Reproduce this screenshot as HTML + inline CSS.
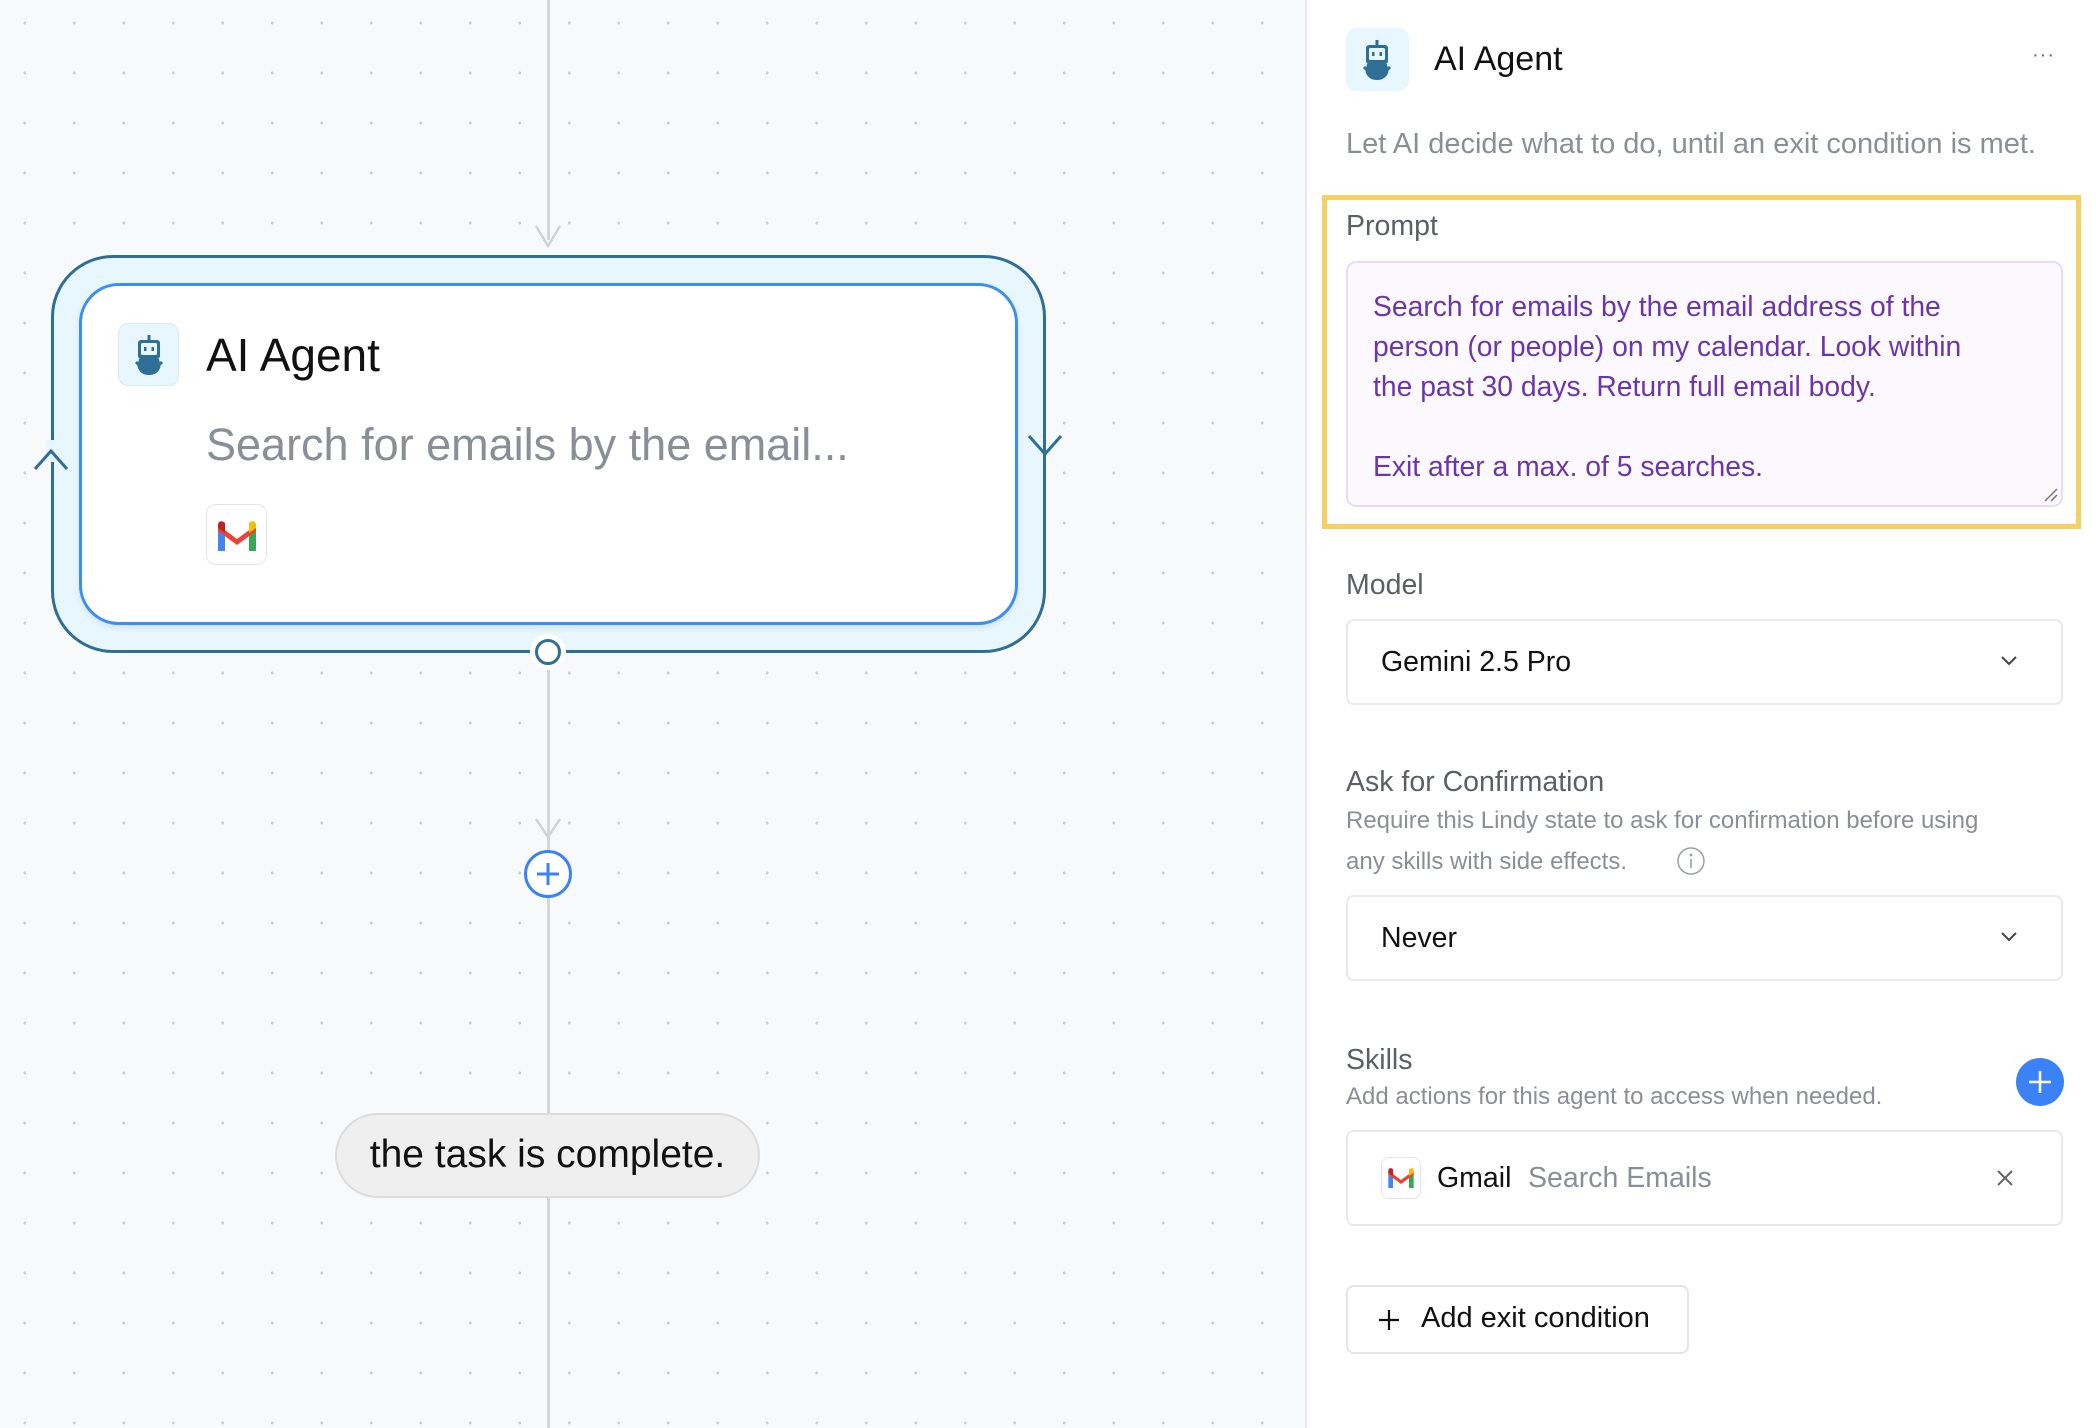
<!DOCTYPE html>
<html><head><meta charset="utf-8"><style>
*{box-sizing:border-box;margin:0;padding:0}
body{width:2096px;height:1428px;overflow:hidden;font-family:"Liberation Sans",sans-serif;position:relative;background:#f8f9fb}
.canvas{position:absolute;left:0;top:0;width:1305px;height:1428px;background-color:#f8f9fb;background-image:radial-gradient(circle,#c9cdd3 1.3px,transparent 1.6px);background-size:49.5px 50px;background-position:0px -2px}
.abs{position:absolute}
.panel{position:absolute;left:1305px;top:0;width:791px;height:1428px;background:#fff;border-left:2px solid #e6e8eb}
.lbl{position:absolute;left:1346px;font-size:28.5px;color:#5b5f66}
.sub{position:absolute;left:1346px;font-size:24px;color:#8a8f97}
.sel{position:absolute;left:1346px;width:717px;border:2px solid #e8e9ec;border-radius:8px;background:#fff}
</style></head><body>
<div class="canvas"></div>
<div class="abs" style="left:547px;top:0;width:3px;height:240px;background:#d3d6db"></div>
<svg class="abs" style="left:528px;top:222px" width="40" height="30"><path d="M8 4 L20 24 L32 4" fill="none" stroke="#cfd2d7" stroke-width="2.5"/></svg>
<div class="abs" style="left:547px;top:664px;width:3px;height:764px;background:#d3d6db"></div>
<svg class="abs" style="left:528px;top:815px" width="40" height="30"><path d="M8 4 L20 22 L32 4" fill="none" stroke="#cfd2d7" stroke-width="2.5"/></svg>
<div class="abs" style="left:51px;top:255px;width:995px;height:398px;border:3px solid #2f6f95;border-radius:62px;background:#e8f6fd"></div>
<div class="abs" style="left:46px;top:440px;width:12px;height:22px;background:#e8f6fd"></div>
<svg class="abs" style="left:31px;top:445px" width="40" height="30"><path d="M4 24 L20 6 L36 24" fill="none" stroke="#2f6f95" stroke-width="3"/></svg>
<svg class="abs" style="left:1025px;top:430px" width="40" height="30"><path d="M4 6 L20 24 L36 6" fill="none" stroke="#2f6f95" stroke-width="3"/></svg>
<div class="abs" style="left:79px;top:283px;width:939px;height:342px;border:3px solid #3b8ef2;border-radius:40px;background:#fff;box-shadow:0 3px 6px rgba(0,0,0,0.08)"></div>
<div class="abs" style="left:530px;top:634px;width:36px;height:36px;border-radius:50%;background:#fff"></div>
<div class="abs" style="left:535px;top:639px;width:26px;height:26px;border-radius:50%;border:3px solid #2f6f95;background:#fff"></div>
<div class="abs" style="left:118px;top:323px;width:61px;height:63px;border-radius:10px;background:#e8f6fd;border:1px solid #dde9f0"></div>
<svg class="abs" style="left:130px;top:334px" width="38" height="42" viewBox="0 0 38 42"><rect x="17.5" y="1" width="3" height="6" fill="#2f6f95"/><rect x="8" y="6" width="22" height="19" rx="3" fill="#2f6f95"/><rect x="11" y="9" width="16" height="12" rx="1.5" fill="#e8f6fd"/><rect x="14" y="13" width="2.5" height="4" fill="#2f6f95"/><rect x="21.5" y="13" width="2.5" height="4" fill="#2f6f95"/><path d="M9 25 H29 C30 30 31 32 30 34 C28 39 24 41 19 41 C14 41 10 39 8 34 C7 32 8 30 9 25Z" fill="#2f6f95"/><path d="M6 28 L9 31 M32 28 L29 31" stroke="#2f6f95" stroke-width="3"/></svg>
<div class="abs" style="left:206px;top:328px;font-size:46px;color:#111;font-weight:500">AI Agent</div>
<div class="abs" style="left:206px;top:419px;font-size:45px;color:#8a8e96">Search for emails by the email...</div>
<div class="abs" style="left:206px;top:504px;width:61px;height:61px;border-radius:10px;background:#fff;border:1.5px solid #e3e5e8"></div>
<svg class="abs" style="left:216px;top:521px" width="42" height="30" viewBox="0 0 42 30"><path d="M2 4 V30 H9 V12Z" fill="#4285f4"/><path d="M40 4 V30 H33 V12Z" fill="#34a853"/><path d="M2 4 L21 18 L40 4 L40 10 L21 24 L2 10Z" fill="#ea4335"/><path d="M2 4 C2 0 6 -1 9 2 L9 12 L2 7Z" fill="#c5221f"/><path d="M40 4 C40 0 36 -1 33 2 L33 12 L40 7Z" fill="#fbbc04"/></svg>
<div class="abs" style="left:524px;top:850px;width:48px;height:48px;border-radius:50%;border:3px solid #3b82f6;background:#fff"></div>
<svg class="abs" style="left:524px;top:850px" width="48" height="48"><path d="M24 13 V35 M13 24 H35" stroke="#3b82f6" stroke-width="3"/></svg>
<div class="abs" style="left:335px;top:1113px;width:425px;height:85px;border-radius:43px;background:#efefef;border:2px solid #dcdcdc;font-size:39px;color:#111;text-align:center;line-height:80px">the task is complete.</div>

<div class="panel"></div>
<div class="abs" style="left:1346px;top:28px;width:63px;height:63px;border-radius:10px;background:#e8f6fd"></div>
<svg class="abs" style="left:1358px;top:39px" width="38" height="42" viewBox="0 0 38 42"><rect x="17.5" y="1" width="3" height="6" fill="#2f6f95"/><rect x="8" y="6" width="22" height="19" rx="3" fill="#2f6f95"/><rect x="11" y="9" width="16" height="12" rx="1.5" fill="#e8f6fd"/><rect x="14" y="13" width="2.5" height="4" fill="#2f6f95"/><rect x="21.5" y="13" width="2.5" height="4" fill="#2f6f95"/><path d="M9 25 H29 C30 30 31 32 30 34 C28 39 24 41 19 41 C14 41 10 39 8 34 C7 32 8 30 9 25Z" fill="#2f6f95"/><path d="M6 28 L9 31 M32 28 L29 31" stroke="#2f6f95" stroke-width="3"/></svg>
<div class="abs" style="left:1434px;top:40px;font-size:34px;color:#111">AI Agent</div>
<div class="abs" style="left:2032px;top:44px;font-size:20px;color:#666;letter-spacing:1px">···</div>
<div class="abs" style="left:1346px;top:128px;font-size:29px;color:#8a8f97">Let AI decide what to do, until an exit condition is met.</div>

<div class="abs" style="left:1322px;top:195px;width:759px;height:334px;border:5px solid #f6d062"></div>
<div class="lbl" style="top:210px">Prompt</div>
<div class="abs" style="left:1346px;top:261px;width:717px;height:246px;border:2px solid #e8dcf4;border-radius:10px;background:#fbf9fe"></div>
<div class="abs" style="left:1373px;top:286px;font-size:28.3px;line-height:40px;color:#6c36ab;white-space:pre">Search for emails by the email address of the
person (or people) on my calendar. Look within
the past 30 days. Return full email body.

Exit after a max. of 5 searches.</div>
<svg class="abs" style="left:2043px;top:487px" width="16" height="16"><path d="M2 14 L14 2 M8 14 L14 8" stroke="#777" stroke-width="1.5"/></svg>

<div class="lbl" style="top:569px">Model</div>
<div class="sel" style="top:619px;height:86px"></div>
<div class="abs" style="left:1381px;top:646px;font-size:28.5px;color:#111">Gemini 2.5 Pro</div>
<svg class="abs" style="left:1999px;top:654px" width="20" height="14"><path d="M3 3 L10 10 L17 3" fill="none" stroke="#444" stroke-width="2"/></svg>

<div class="lbl" style="top:766px">Ask for Confirmation</div>
<div class="sub" style="top:807px">Require this Lindy state to ask for confirmation before using</div>
<div class="sub" style="top:848px">any skills with side effects.</div>
<svg class="abs" style="left:1676px;top:846px" width="30" height="30"><circle cx="15" cy="15" r="13" fill="none" stroke="#9a9ea5" stroke-width="1.5"/><circle cx="15" cy="9" r="1.4" fill="#9a9ea5"/><path d="M15 13 V22" stroke="#9a9ea5" stroke-width="1.6"/></svg>
<div class="sel" style="top:895px;height:86px"></div>
<div class="abs" style="left:1381px;top:922px;font-size:28.5px;color:#111">Never</div>
<svg class="abs" style="left:1999px;top:930px" width="20" height="14"><path d="M3 3 L10 10 L17 3" fill="none" stroke="#444" stroke-width="2"/></svg>

<div class="lbl" style="top:1044px">Skills</div>
<div class="sub" style="top:1083px">Add actions for this agent to access when needed.</div>
<div class="abs" style="left:2016px;top:1058px;width:48px;height:48px;border-radius:50%;background:#3b82f6"></div>
<svg class="abs" style="left:2016px;top:1058px" width="48" height="48"><path d="M24 13 V35 M13 24 H35" stroke="#fff" stroke-width="2.5"/></svg>
<div class="sel" style="top:1130px;height:96px"></div>
<div class="abs" style="left:1381px;top:1157px;width:40px;height:42px;border-radius:8px;border:1.5px solid #e3e5e8;background:#fff"></div>
<svg class="abs" style="left:1387px;top:1168px" width="28" height="20" viewBox="0 0 42 30"><path d="M2 4 V30 H9 V12Z" fill="#4285f4"/><path d="M40 4 V30 H33 V12Z" fill="#34a853"/><path d="M2 4 L21 18 L40 4 L40 10 L21 24 L2 10Z" fill="#ea4335"/><path d="M2 4 C2 0 6 -1 9 2 L9 12 L2 7Z" fill="#c5221f"/><path d="M40 4 C40 0 36 -1 33 2 L33 12 L40 7Z" fill="#fbbc04"/></svg>
<div class="abs" style="left:1437px;top:1162px;font-size:28.5px;color:#111;font-weight:500">Gmail</div>
<div class="abs" style="left:1528px;top:1162px;font-size:28.5px;color:#8a8f97">Search Emails</div>
<svg class="abs" style="left:1995px;top:1168px" width="20" height="20"><path d="M3 3 L17 17 M17 3 L3 17" stroke="#666" stroke-width="2"/></svg>

<div class="abs" style="left:1346px;top:1285px;width:343px;height:69px;border:2px solid #e4e5e8;border-radius:8px;background:#fff"></div>
<svg class="abs" style="left:1377px;top:1308px" width="24" height="24"><path d="M12 2 V22 M2 12 H22" stroke="#111" stroke-width="2.2"/></svg>
<div class="abs" style="left:1421px;top:1302px;font-size:29px;color:#111">Add exit condition</div>
</body></html>
